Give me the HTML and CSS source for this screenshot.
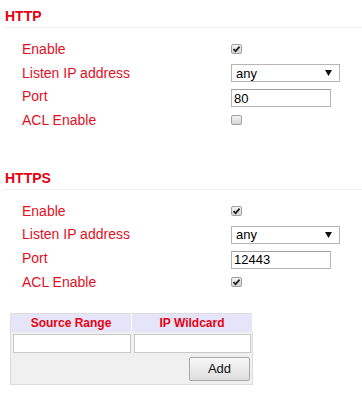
FILE: index.html
```html
<!doctype html>
<html lang="en">
<head>
  <meta charset="UTF-8">
  <title>HTTP / HTTPS</title>
  <link rel="stylesheet" href="styles.css">
</head>
<body>
  <div class="section">
    <h2>HTTP</h2>
    <div class="form">
      <label>Enable</label>
      <div><input type="checkbox" checked></div>
      <label>Listen IP address</label>
      <div>
        <select class="sel">
          <option>any</option>
        </select>
      </div>
      <label>Port</label>
      <div><input class="txt" type="text" value="80"></div>
      <label>ACL Enable</label>
      <div><input type="checkbox"></div>
    </div>
  </div>

  <div class="section second">
    <h2>HTTPS</h2>
    <div class="form">
      <label>Enable</label>
      <div><input type="checkbox" checked></div>
      <label>Listen IP address</label>
      <div>
        <select class="sel">
          <option>any</option>
        </select>
      </div>
      <label>Port</label>
      <div><input class="txt" type="text" value="12443"></div>
      <label>ACL Enable</label>
      <div><input type="checkbox" checked></div>
    </div>

    <table class="acl">
      <tr>
        <th>Source Range</th>
        <th>IP Wildcard</th>
      </tr>
      <tr>
        <td><input class="cell" type="text"></td>
        <td><input class="cell" type="text"></td>
      </tr>
      <tr>
        <td colspan="2" class="actions"><button type="button" class="btn">Add</button></td>
      </tr>
    </table>
  </div>
</body>
</html>
```
FILE: styles.css
```css
body {
  margin: 0px;
  padding: 0px;
  background-color: #ffffff;
  font-family: "Liberation Sans", Arial, sans-serif;
}

h2 {
  margin: 8px 0px 0px 4px;
  padding: 0px 0px 3px 1px;
  font-size: 14px;
  line-height: 16px;
  font-weight: bold;
  color: #e60012;
  border-bottom: solid 1px #eeeeee;
}

/* h2 margin collapses into this one */
.second {
  margin-top: 37px;
}

.form {
  display: grid;
  grid-template-columns: 209px 1fr;
  grid-auto-rows: 23.7px;
  padding: 10px 0px 0px 22px;
}

.form label {
  font-size: 14px;
  line-height: 23px;
  color: #e2101f;
}

.form div {
  display: flex;
  align-items: center;
}

input[type="checkbox"] {
  -webkit-appearance: none;
  appearance: none;
  width: 11px;
  height: 10px;
  margin: 0px 0px 2px 0px;
  border: solid 1px #a0a0a0;
  border-radius: 2px;
  background: linear-gradient(#f4f4f4, #d4d4d4);
}

input[type="checkbox"]:checked {
  background: url("data:image/svg+xml;utf8,<svg xmlns='http://www.w3.org/2000/svg' width='9' height='8' viewBox='0 0 9 8'><path d='M1.5 4.2 L3.6 6.2 L7.6 1.6' fill='none' stroke='%23222' stroke-width='1.8'/></svg>") center no-repeat, linear-gradient(#f4f4f4, #d4d4d4);
}

.sel {
  -webkit-appearance: none;
  appearance: none;
  width: 109px;
  height: 18px;
  margin: 0px 0px 1px 0px;
  padding: 0px 0px 0px 4px;
  font: 13px "Liberation Sans", Arial, sans-serif;
  color: #000000;
  border: solid 1px #b5b5b5;
  border-radius: 0px;
  background: #ffffff url("data:image/svg+xml;utf8,<svg xmlns='http://www.w3.org/2000/svg' width='7' height='6' viewBox='0 0 7 6'><path d='M0 0 L7 0 L3.5 6 Z' fill='%23111'/></svg>") right 7px center no-repeat;
}

.txt {
  width: 100px;
  height: 18px;
  box-sizing: border-box;
  margin: 2px 0px 0px 0px;
  padding: 0px 2px;
  font: 13px "Liberation Sans", Arial, sans-serif;
  border: solid 1px #b5b5b5;
  border-top-color: #a0a0a0;
}

.acl {
  margin: 18px 0px 0px 10px;
  width: 243px;
  border-collapse: collapse;
  border: solid 1px #dddddd;
  background-color: #f0f0f0;
}

.acl th {
  height: 18px;
  padding: 0px;
  width: 50%;
  font-size: 12px;
  font-weight: bold;
  color: #e60012;
  background-color: #e6e4f8;
  border-right: solid 1px #ffffff;
}

.acl td {
  padding: 2px 1px 2px 2px;
}

.cell {
  width: 100%;
  height: 19px;
  box-sizing: border-box;
  margin: 0px;
  border: solid 1px #c8c8c8;
  background-color: #ffffff;
}

.actions {
  text-align: right;
}

.btn {
  width: 61px;
  height: 24px;
  margin: 0px 1px 1px 0px;
  font: 13px "Liberation Sans", Arial, sans-serif;
  color: #111111;
  border: solid 1px #a8a8a8;
  border-radius: 2px;
  background: linear-gradient(#f8f8f8, #dedede);
}
```
